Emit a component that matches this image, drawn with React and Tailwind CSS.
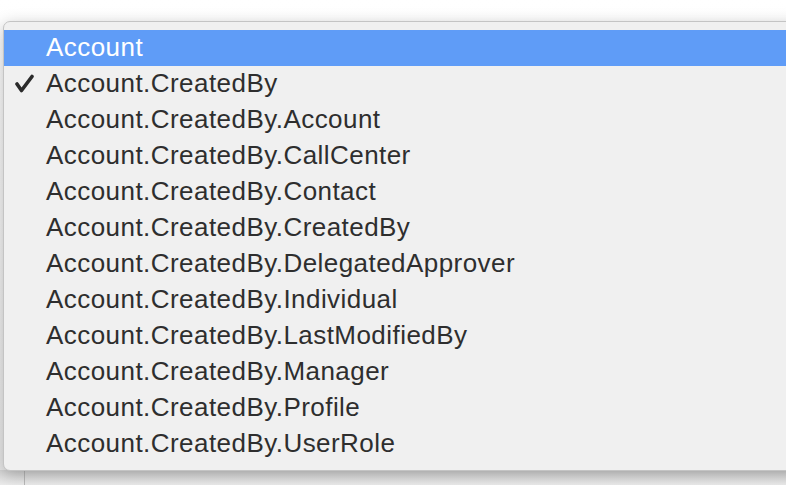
const items = [
  "Account",
  "Account.CreatedBy",
  "Account.CreatedBy.Account",
  "Account.CreatedBy.CallCenter",
  "Account.CreatedBy.Contact",
  "Account.CreatedBy.CreatedBy",
  "Account.CreatedBy.DelegatedApprover",
  "Account.CreatedBy.Individual",
  "Account.CreatedBy.LastModifiedBy",
  "Account.CreatedBy.Manager",
  "Account.CreatedBy.Profile",
  "Account.CreatedBy.UserRole",
];

const highlighted = 0;
const checked = 1;

function Check() {
  return (
    <svg width="20" height="20" viewBox="0 0 20 20" className="block">
      <path
        d="M2 10 L6.5 16.5 L17 2.5"
        fill="none"
        stroke="#2b2b2b"
        strokeWidth="3.6"
        strokeLinecap="round"
        strokeLinejoin="round"
      />
    </svg>
  );
}

export default function App() {
  return (
    <div
      className="relative w-[786px] h-[485px] overflow-hidden bg-gradient-to-b from-[#ffffff] to-[#e9e9e9]"
      style={{ fontFamily: '"Liberation Sans", Arial, sans-serif' }}
    >
      {/* window content peeking out under the menu */}
      <div className="absolute left-0 top-[470px] w-full h-[15px] bg-gradient-to-b from-[#d6d6d6] to-[#ececec]">
        <div className="absolute left-[24px] top-0 h-full w-px bg-[#b9b9b9]" />
      </div>

      <div className="absolute left-[3px] top-[21px] w-[800px] h-[450px] rounded-l-[7px] border border-[#c4c4c4] bg-[#f0f0f0] py-[8px] shadow-[0_4px_16px_rgba(0,0,0,0.25)]">
        {items.map((label, i) => (
          <div
            key={label}
            className={
              "flex items-center h-[36px] " +
              (i === highlighted ? "bg-[#5f9cf7] text-white" : "text-[#2e2e2e]")
            }
          >
            <div className="w-[42px] flex justify-start pl-[11px]">
              {i === checked && <Check />}
            </div>
            <span className="text-[26px] leading-none tracking-[0.45px] pb-[2px]">{label}</span>
          </div>
        ))}
      </div>
    </div>
  );
}
